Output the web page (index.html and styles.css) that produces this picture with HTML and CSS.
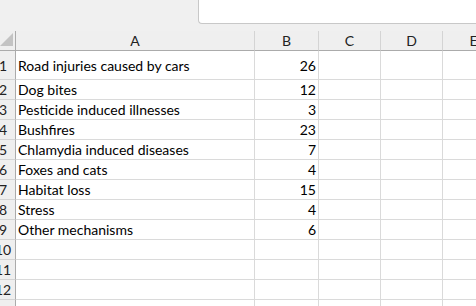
FILE: index.html
```html
<!DOCTYPE html>
<html lang="en">
<head>
    <meta charset="UTF-8">
    <meta name="viewport" content="width=device-width, initial-scale=1.0">
    <title>Sheet1</title>
    <link rel="stylesheet" href="styles.css">
</head>
<body>

<div class="formula-band">
    <div class="formula-box"></div>
</div>

<div class="sheet">
    <!-- column headers -->
    <div class="corner"><span class="select-tri"></span></div>
    <div class="col-head">A</div>
    <div class="col-head">B</div>
    <div class="col-head">C</div>
    <div class="col-head">D</div>
    <div class="col-head">E</div>

    <div class="row-head">1</div>
    <div class="cell">Road injuries caused by cars</div>
    <div class="cell num">26</div>
    <div class="cell"></div><div class="cell"></div><div class="cell"></div>

    <div class="row-head">2</div>
    <div class="cell">Dog bites</div>
    <div class="cell num">12</div>
    <div class="cell"></div><div class="cell"></div><div class="cell"></div>

    <div class="row-head">3</div>
    <div class="cell">Pesticide induced illnesses</div>
    <div class="cell num">3</div>
    <div class="cell"></div><div class="cell"></div><div class="cell"></div>

    <div class="row-head">4</div>
    <div class="cell">Bushfires</div>
    <div class="cell num">23</div>
    <div class="cell"></div><div class="cell"></div><div class="cell"></div>

    <div class="row-head">5</div>
    <div class="cell">Chlamydia induced diseases</div>
    <div class="cell num">7</div>
    <div class="cell"></div><div class="cell"></div><div class="cell"></div>

    <div class="row-head">6</div>
    <div class="cell">Foxes and cats</div>
    <div class="cell num">4</div>
    <div class="cell"></div><div class="cell"></div><div class="cell"></div>

    <div class="row-head">7</div>
    <div class="cell">Habitat loss</div>
    <div class="cell num">15</div>
    <div class="cell"></div><div class="cell"></div><div class="cell"></div>

    <div class="row-head">8</div>
    <div class="cell">Stress</div>
    <div class="cell num">4</div>
    <div class="cell"></div><div class="cell"></div><div class="cell"></div>

    <div class="row-head">9</div>
    <div class="cell">Other mechanisms</div>
    <div class="cell num">6</div>
    <div class="cell"></div><div class="cell"></div><div class="cell"></div>

    <div class="row-head">10</div>
    <div class="cell"></div><div class="cell"></div><div class="cell"></div><div class="cell"></div><div class="cell"></div>

    <div class="row-head">11</div>
    <div class="cell"></div><div class="cell"></div><div class="cell"></div><div class="cell"></div><div class="cell"></div>

    <div class="row-head">12</div>
    <div class="cell"></div><div class="cell"></div><div class="cell"></div><div class="cell"></div><div class="cell"></div>

    <div class="row-head"></div>
    <div class="cell"></div><div class="cell"></div><div class="cell"></div><div class="cell"></div><div class="cell"></div>
</div>

</body>
</html>
```

FILE: styles.css
```css
/* General Styles */
* {
    box-sizing: border-box;
    margin: 0;
    padding: 0;
}

body {
    font-family: Lato, "Open Sans", sans-serif;
    font-size: 14px;
    color: #000;
    background-color: #fff;
    overflow: hidden;
    height: 306px;
}

/* Formula bar strip */
.formula-band {
    height: 31px;
    background-color: #f0f0f0;
    padding-left: 198px;
}

.formula-box {
    height: 24px;
    background-color: #fff;
    border-left: 1px solid #c8c8c8;
    border-bottom: 1px solid #c8c8c8;
    border-bottom-left-radius: 4px;
}

/* Grid */
.sheet {
    display: grid;
    grid-template-columns: 25px 239px 64px 62px 62px 62px;
    grid-template-rows: 20px 29px;
    grid-auto-rows: 20px;
    margin-left: -9px;
}

.sheet > div {
    border-right: 1px solid #dadada;
    border-bottom: 1px solid #dadada;
    display: flex;
    align-items: center;
    white-space: nowrap;
    overflow: hidden;
}

.sheet .corner,
.sheet .col-head {
    background-color: #efefef;
    border-bottom-color: #ababab;
    border-right-color: #d4d4d4;
}

.sheet .corner {
    justify-content: flex-end;
    align-items: flex-end;
    padding: 0 2px 4px 0;
    border-right-color: #ababab;
}

.select-tri {
    width: 0;
    height: 0;
    border-left: 13px solid transparent;
    border-bottom: 13px solid #c3c3c3;
}

.sheet .col-head {
    justify-content: center;
    color: #222;
}

.sheet .row-head {
    background-color: #efefef;
    border-right-color: #ababab;
    border-bottom-color: #d4d4d4;
    justify-content: center;
    color: #222;
}

.sheet .cell {
    padding: 0 2px;
}

.sheet .num {
    justify-content: flex-end;
}
```
